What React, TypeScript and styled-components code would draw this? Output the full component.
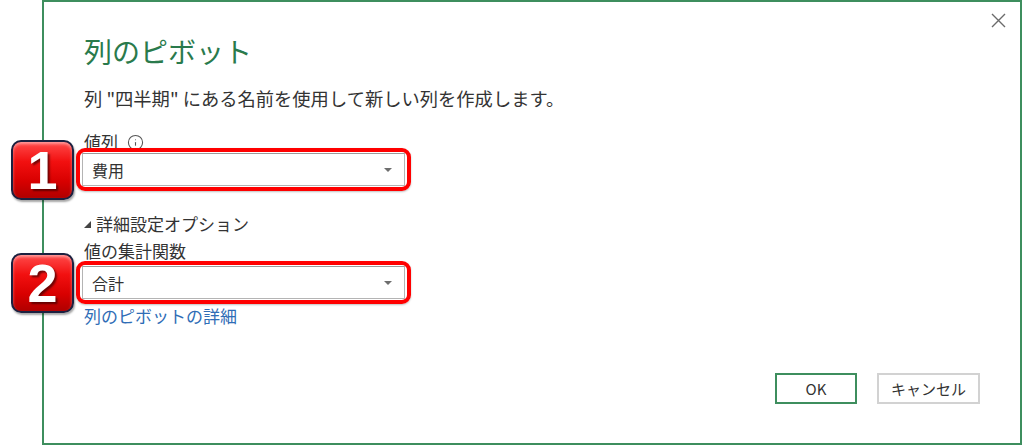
import React from "react";
import styled, { createGlobalStyle } from "styled-components";
import { Info } from "lucide-react";

const GlobalStyle = createGlobalStyle`
  html, body {
    margin: 0;
    padding: 0;
    background: #ffffff;
  }
  body {
    font-family: "Noto Sans CJK JP", "Noto Sans", sans-serif;
    color: #333333;
  }
`;

const Page = styled.div`
  width: 1024px;
  height: 447px;
  padding-left: 42px;
  box-sizing: border-box;
`;

const Dialog = styled.div`
  position: relative;
  width: 980px;
  height: 445px;
  box-sizing: border-box;
  border: 2px solid #3e8e5e;
  background: #ffffff;
  display: flex;
  flex-direction: column;
  padding: 32px 40px 39px 40px;
`;

const CloseButton = styled.button`
  position: absolute;
  top: 8px;
  right: 12px;
  width: 20px;
  height: 20px;
  padding: 0;
  border: none;
  background: transparent;
  display: flex;
  align-items: center;
  justify-content: center;
`;

const Title = styled.h1`
  margin: 0;
  font-size: 28px;
  line-height: 34px;
  font-weight: 400;
  color: #2a7a4c;
`;

const Subtitle = styled.p`
  margin: 18px 0 0 0;
  font-size: 18.3px;
  line-height: 24px;
  color: #333333;
`;

const Label = styled.div<{ $gap: number }>`
  margin-top: ${(p) => p.$gap}px;
  font-size: 17px;
  line-height: 20px;
  color: #333333;
  display: flex;
  align-items: center;
  gap: 9px;
`;

const Field = styled.div<{ $gap: number }>`
  position: relative;
  margin-top: ${(p) => p.$gap}px;
  margin-left: -2px;
  width: 323px;
  height: 33px;
  box-sizing: border-box;
  border: 1px solid #b4b4b4;
  border-top-color: #9a9a9a;
  background: #ffffff;
  display: flex;
  align-items: center;
  padding: 0 12px 0 9px;
  font-size: 16px;
  color: #333333;

  &::before {
    content: "";
    position: absolute;
    inset: -6px -7px -6px -7px;
    border: 4px solid #ff0000;
    border-radius: 9px;
    box-shadow: 0 1px 2px rgba(0, 0, 0, 0.25);
    pointer-events: none;
  }
`;

const FieldValue = styled.span`
  flex: 1;
`;

const Caret = styled.span`
  width: 0;
  height: 0;
  border-left: 4px solid transparent;
  border-right: 4px solid transparent;
  border-top: 4px solid #6e6e6e;
`;

const Badge = styled.div`
  position: absolute;
  left: -72px;
  top: 50%;
  transform: translateY(-50%);
  width: 63px;
  height: 60px;
  box-sizing: border-box;
  border: 2px solid #1c2140;
  border-radius: 10px;
  background: linear-gradient(180deg, #ff4a4a 0%, #f21010 35%, #d80000 70%, #b00000 100%);
  box-shadow: 1px 2px 2px rgba(0, 0, 0, 0.35), inset 0 2px 3px rgba(255, 255, 255, 0.45);
  display: flex;
  align-items: center;
  justify-content: center;
  font-family: "Liberation Sans", Arial, sans-serif;
  font-weight: 700;
  font-size: 54px;
  line-height: 1;
  color: #ffffff;
  text-shadow: 2px 2px 2px rgba(60, 0, 0, 0.7);
`;

const Toggle = styled.div`
  margin-top: 27px;
  font-size: 17px;
  line-height: 22px;
  color: #333333;
  display: flex;
  align-items: center;
  gap: 5px;
`;

const Link = styled.a`
  margin-top: 6px;
  font-size: 17px;
  line-height: 22px;
  color: #2f6db6;
  text-decoration: none;
`;

const Footer = styled.div`
  margin-top: auto;
  display: flex;
  justify-content: flex-end;
  gap: 20px;
`;

const Button = styled.button<{ $primary?: boolean }>`
  height: 31px;
  box-sizing: border-box;
  min-width: ${(p) => (p.$primary ? 82 : 102)}px;
  border: ${(p) => (p.$primary ? "2px solid #3e8e5e" : "2px solid #d2d2d2")};
  background: #ffffff;
  font-family: "Noto Sans CJK JP", "Noto Sans", sans-serif;
  font-size: 15px;
  color: #333333;
  padding: 0 12px;
`;

export default function App() {
  return (
    <Page>
      <GlobalStyle />
      <Dialog>
        <CloseButton aria-label="閉じる">
          <svg width="15" height="15" viewBox="0 0 15 15">
            <path d="M1 1 L14 14 M14 1 L1 14" stroke="#6b6b6b" strokeWidth="1.4" fill="none" />
          </svg>
        </CloseButton>
        <Title>列のピボット</Title>
        <Subtitle>列 "四半期" にある名前を使用して新しい列を作成します。</Subtitle>

        <Label $gap={22}>
          値列
          <Info size={17} strokeWidth={1.5} color="#555555" />
        </Label>
        <Field $gap={1}>
          <Badge>1</Badge>
          <FieldValue>費用</FieldValue>
          <Caret />
        </Field>

        <Toggle>
          <svg width="7" height="7" viewBox="0 0 7 7">
            <polygon points="7,0 7,7 0,7" fill="#444444" />
          </svg>
          詳細設定オプション
        </Toggle>
        <Label $gap={6}>値の集計関数</Label>
        <Field $gap={5}>
          <Badge>2</Badge>
          <FieldValue>合計</FieldValue>
          <Caret />
        </Field>
        <Link href="#">列のピボットの詳細</Link>

        <Footer>
          <Button $primary>OK</Button>
          <Button>キャンセル</Button>
        </Footer>
      </Dialog>
    </Page>
  );
}
